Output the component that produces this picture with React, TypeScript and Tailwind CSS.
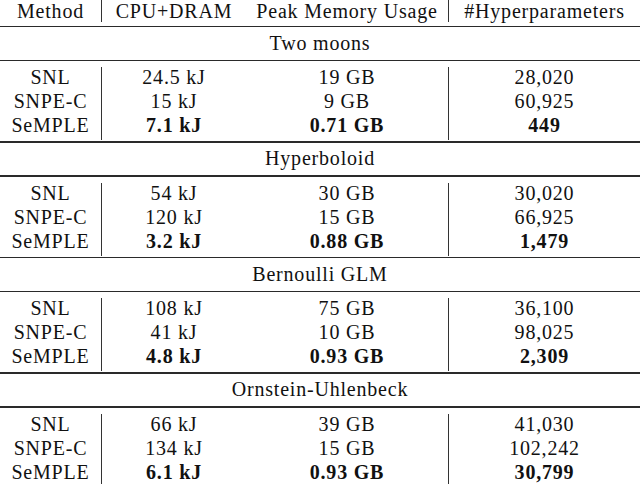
const sections = [
  {
    title: 'Two moons',
    rows: [
      ['SNL', '24.5 kJ', '19 GB', '28,020'],
      ['SNPE-C', '15 kJ', '9 GB', '60,925'],
      ['SeMPLE', '7.1 kJ', '0.71 GB', '449'],
    ],
  },
  {
    title: 'Hyperboloid',
    rows: [
      ['SNL', '54 kJ', '30 GB', '30,020'],
      ['SNPE-C', '120 kJ', '15 GB', '66,925'],
      ['SeMPLE', '3.2 kJ', '0.88 GB', '1,479'],
    ],
  },
  {
    title: 'Bernoulli GLM',
    rows: [
      ['SNL', '108 kJ', '75 GB', '36,100'],
      ['SNPE-C', '41 kJ', '10 GB', '98,025'],
      ['SeMPLE', '4.8 kJ', '0.93 GB', '2,309'],
    ],
  },
  {
    title: 'Ornstein-Uhlenbeck',
    rows: [
      ['SNL', '66 kJ', '39 GB', '41,030'],
      ['SNPE-C', '134 kJ', '15 GB', '102,242'],
      ['SeMPLE', '6.1 kJ', '0.93 GB', '30,799'],
    ],
  },
];

const cols = 'grid grid-cols-[102px_144px_203px_1fr]';

function Rule() {
  return <div className="h-[1.5px] bg-[#2a2a2a]" />;
}

export default function App() {
  return (
    <div className="w-[640px] h-[484px] overflow-hidden bg-white text-[#111] text-[20px] tracking-[0.8px] leading-none font-['Liberation_Serif','Times_New_Roman',serif]">
      <div className="pb-[3.5px]">
        <div className={`${cols} h-[22px] items-center text-center`}>
          <div className="h-full flex items-center justify-center border-r border-[#333]">Method</div>
          <div>CPU+DRAM</div>
          <div className="h-full flex items-center justify-center border-r border-[#333]">Peak Memory Usage</div>
          <div>#Hyperparameters</div>
        </div>
      </div>

      {sections.map((s) => (
        <div key={s.title}>
          <Rule />
          <div className="h-[32.5px] flex items-center justify-center pb-[1px]">{s.title}</div>
          <Rule />
          <div className="pt-[6px] pb-[2px]">
            {s.rows.map((r, i) => {
              const bold = i === 2;
              const cell = 'flex items-center justify-center pb-[5px]';
              return (
                <div key={r[0]} className={`${cols} h-[24px] text-center`}>
                  <div className={`${cell} border-r border-[#333]`}>{r[0]}</div>
                  <div className={`${cell} ${bold ? 'font-bold' : ''}`}>{r[1]}</div>
                  <div className={`${cell} border-r border-[#333] ${bold ? 'font-bold' : ''}`}>{r[2]}</div>
                  <div className={`${cell} ${bold ? 'font-bold' : ''}`}>{r[3]}</div>
                </div>
              );
            })}
          </div>
        </div>
      ))}
    </div>
  );
}
